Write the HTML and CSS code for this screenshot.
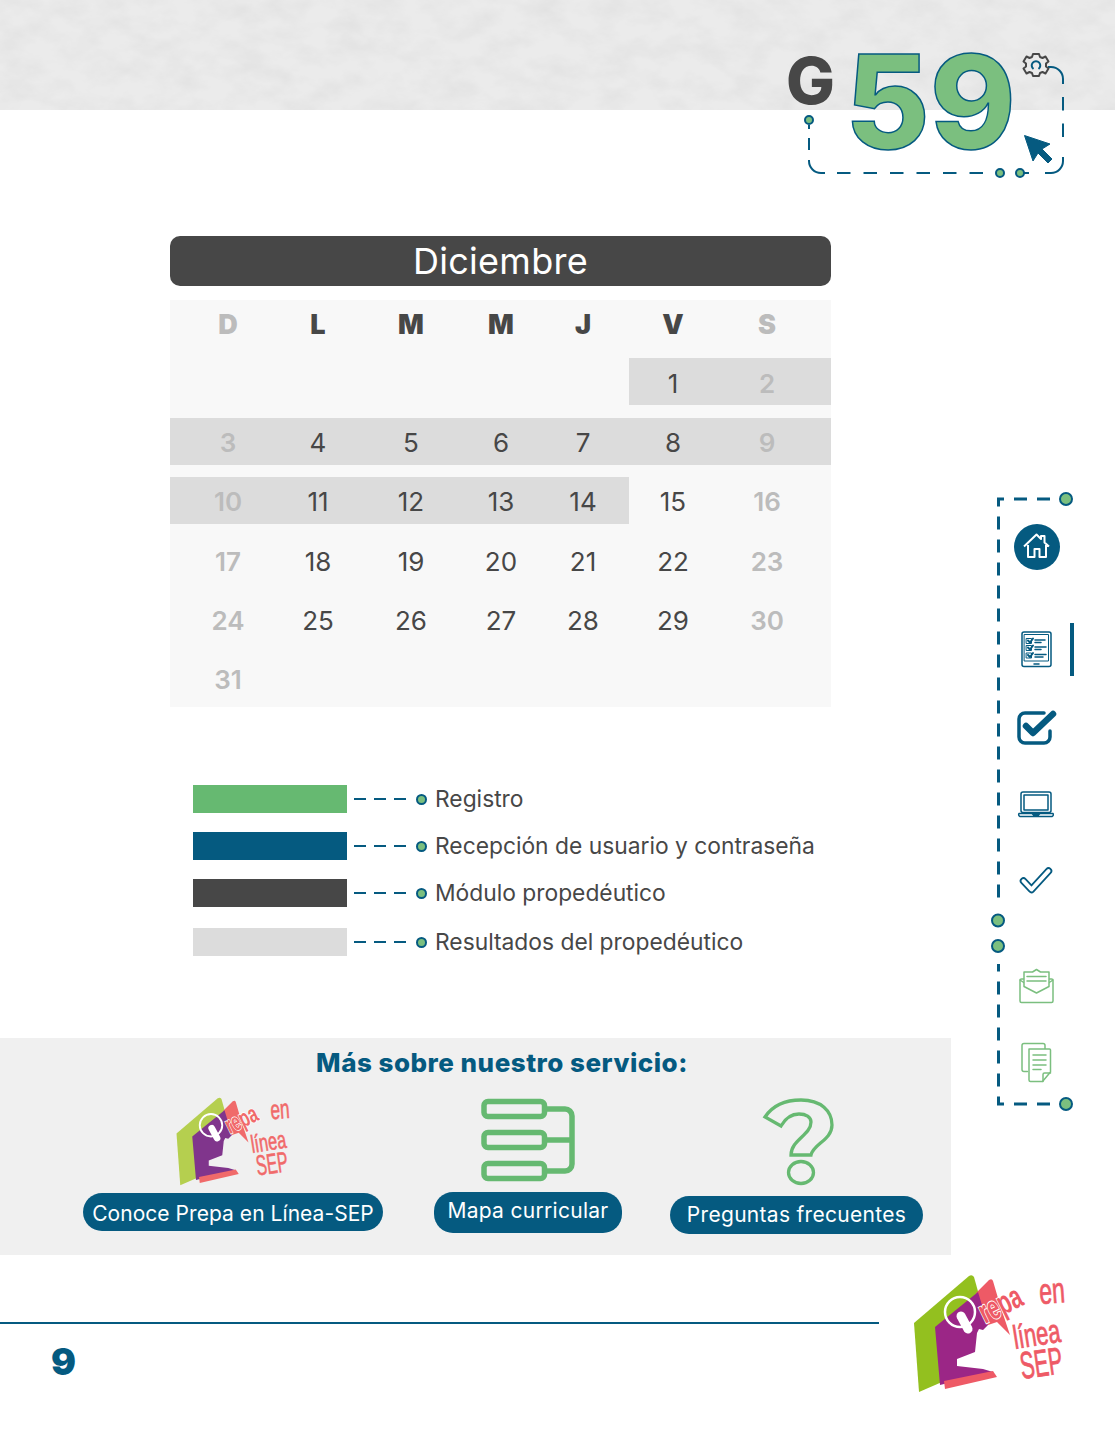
FILE: index.html
```html
<!DOCTYPE html>
<html lang="es">
<head>
<meta charset="utf-8">
<title>Calendario Diciembre</title>
<link rel="stylesheet" href="styles.css">
</head>
<body>
<div class="page">
  <header class="band">
    <svg class="texture" width="1115" height="110" aria-hidden="true">
      <filter id="mottle" x="0" y="0" width="100%" height="100%">
        <feTurbulence type="fractalNoise" baseFrequency="0.03 0.05" numOctaves="5" seed="7"/>
        <feColorMatrix type="matrix" values="0 0 0 0 0.6  0 0 0 0 0.6  0 0 0 0 0.6  0.5 0 0 0 -0.18"/>
      </filter>
      <rect width="1115" height="110" filter="url(#mottle)"/>
    </svg>
  </header>

  <svg class="badge" viewBox="780 40 300 145" width="300" height="145">
    <path class="deco-line" d="M809 125v4M809 160v1a12 12 0 0 0 12 12h4M1020 173h9M1045 173h6a12 12 0 0 0 12-12v-4M1048 67h3a12 12 0 0 1 12 12v5"/>
    <path class="deco-dash" d="M809 138V150M837 173H985M1063 97V150"/>
    <text class="badge-g" x="786" y="104" textLength="49" lengthAdjust="spacingAndGlyphs">G</text>
    <text class="badge-num" x="845" y="149" textLength="171" lengthAdjust="spacingAndGlyphs">59</text>
    <circle class="deco-dot small" cx="809" cy="120" r="4"/>
    <circle class="deco-dot small" cx="1000" cy="173" r="4"/>
    <circle class="deco-dot small" cx="1020" cy="173" r="4"/>
    <path class="gear" d="M1033 54h6l1 3 2.500 1 3-1.500 3 5-2.500 2v3l2.500 2-3 5-3-1.500-2.500 1-1 3h-6l-1-3-2.500-1-3 1.500-3-5 2.500-2v-3l-2.500-2 3-5 3 1.500 2.500-1z"/>
    <path class="gear-in" d="M1033.500 69a4.300 4.300 0 1 1 5 0"/>
    <path class="cursor" d="M1024.500 135.500L1050 144l-8 5 10 10-4 4-10-10-5 8z"/>
  </svg>

  <main class="main">
    <h1 class="month">Diciembre</h1>
    <section class="calendar">
      <div class="cell head wk">D</div><div class="cell head">L</div><div class="cell head">M</div><div class="cell head">M</div><div class="cell head">J</div><div class="cell head">V</div><div class="cell head wk">S</div>

      <div class="cell"></div><div class="cell"></div><div class="cell"></div><div class="cell"></div><div class="cell"></div><div class="cell hl">1</div><div class="cell wk hl">2</div>

      <div class="cell wk hl">3</div><div class="cell hl">4</div><div class="cell hl">5</div><div class="cell hl">6</div><div class="cell hl">7</div><div class="cell hl">8</div><div class="cell wk hl">9</div>

      <div class="cell wk hl">10</div><div class="cell hl">11</div><div class="cell hl">12</div><div class="cell hl">13</div><div class="cell hl">14</div><div class="cell">15</div><div class="cell wk">16</div>

      <div class="cell wk">17</div><div class="cell">18</div><div class="cell">19</div><div class="cell">20</div><div class="cell">21</div><div class="cell">22</div><div class="cell wk">23</div>

      <div class="cell wk">24</div><div class="cell">25</div><div class="cell">26</div><div class="cell">27</div><div class="cell">28</div><div class="cell">29</div><div class="cell wk">30</div>

      <div class="cell wk">31</div><div class="cell"></div><div class="cell"></div><div class="cell"></div><div class="cell"></div><div class="cell"></div><div class="cell"></div>
    </section>

    <ul class="legend">
      <li class="legend-row"><span class="swatch green"></span><span class="dash"></span><span class="dot"></span><span class="legend-text">Registro</span></li>
      <li class="legend-row"><span class="swatch blue"></span><span class="dash"></span><span class="dot"></span><span class="legend-text">Recepción de usuario y contraseña</span></li>
      <li class="legend-row"><span class="swatch dark"></span><span class="dash"></span><span class="dot"></span><span class="legend-text">Módulo propedéutico</span></li>
      <li class="legend-row last"><span class="swatch grey"></span><span class="dash"></span><span class="dot"></span><span class="legend-text">Resultados del propedéutico</span></li>
    </ul>
  </main>

  <section class="services">
    <h2 class="services-title">Más sobre nuestro servicio:</h2>
    <div class="services-row">
      <div class="service s-one">
        <svg class="logo-small" viewBox="0 0 180 130" width="135" height="97.500">
          <path class="lg-green soft" d="M14 58L69 11q3-2 5 1L79 30 42 117 19 127z"/>
          <path class="lg-coral soft" d="M76 28L89 15q3-2 4 1l7 24 10 30-13-13-9 3z"/>
          <path class="lg-purple" d="M35 62L78 27 88 60l-5 5-4-1-2 4-2 19-18 7 0 7 26 3 10 3-53 13z"/>
          <path class="lg-coral soft" d="M44 116L93 106l4 6-52 12z"/>
          <circle class="lg-ring" cx="60" cy="47" r="15"/>
          <path class="lg-finger" d="M61 51L68 64"/>
          <text class="lg-text halo" transform="translate(85 59) rotate(-26) scale(.64 1)" font-size="33">repa</text>
          <text class="lg-text" transform="translate(140 39) rotate(-4) scale(.64 1)" font-size="36">en</text>
          <text class="lg-text" transform="translate(115 84) rotate(-9) scale(.66 1)" font-size="33">línea</text>
          <text class="lg-text" transform="translate(122 114) rotate(-8) scale(.56 1)" font-size="38">SEP</text>
        </svg>
        <a class="pill tight">Conoce Prepa en Línea-SEP</a>
      </div>
      <div class="service s-two">
        <svg class="icon-map" viewBox="478 1096 100 88" width="100" height="88">
          <g class="map-stroke">
            <rect x="484" y="1101.500" width="60.500" height="15" rx="4"/>
            <rect x="484" y="1132.500" width="60.500" height="15" rx="4"/>
            <rect x="484" y="1163.500" width="60.500" height="15" rx="4"/>
            <path d="M547 1109h18a7 7 0 0 1 7 7v48a7 7 0 0 1-7 7h-18M547 1140h25"/>
          </g>
        </svg>
        <a class="pill">Mapa curricular</a>
      </div>
      <div class="service s-three">
        <svg class="icon-q" viewBox="761 1098 73 90" width="73" height="90">
          <path class="map-stroke thin" d="M764 1117C772 1105 785 1100 800 1100C820 1100 831 1111 831 1125C831 1140 812 1144 810 1155H790C790 1140 810 1135 810 1122C810 1117 805 1114 798 1114C790 1114 784 1119 780 1126Z"/>
          <ellipse class="map-stroke thin" cx="800" cy="1172.500" rx="12.500" ry="11"/>
        </svg>
        <a class="pill lower">Preguntas frecuentes</a>
      </div>
    </div>
  </section>

  <footer class="footer">
    <div class="footer-left">
      <div class="rule"></div>
      <div class="page-num">9</div>
    </div>
    <svg class="logo-big" viewBox="0 0 180 130" width="180" height="130">
      <path class="lg-green bright" d="M14 58L69 11q3-2 5 1L79 30 42 117 19 127z"/>
      <path class="lg-coral" d="M76 28L89 15q3-2 4 1l7 24 10 30-13-13-9 3z"/>
      <path class="lg-purple deep" d="M35 62L78 27 88 60l-5 5-4-1-2 4-2 19-18 7 0 7 26 3 10 3-53 13z"/>
      <path class="lg-coral" d="M44 116L93 106l4 6-52 12z"/>
      <circle class="lg-ring" cx="60" cy="47" r="15"/>
      <path class="lg-finger" d="M61 51L68 64"/>
      <text class="lg-text big halo" transform="translate(85 59) rotate(-26) scale(.64 1)" font-size="33">repa</text>
      <text class="lg-text big" transform="translate(140 39) rotate(-4) scale(.64 1)" font-size="36">en</text>
      <text class="lg-text big" transform="translate(115 84) rotate(-9) scale(.66 1)" font-size="33">línea</text>
      <text class="lg-text big" transform="translate(122 114) rotate(-8) scale(.56 1)" font-size="38">SEP</text>
    </svg>
  </footer>

  <svg class="rail" viewBox="985 485 100 635" width="100" height="635">
    <path class="deco-dash rail-line" d="M1050 499H998.500V902"/>
    <path class="deco-dash rail-line" d="M1050 1104H998.500V964"/>
    <circle class="deco-dot" cx="1066" cy="499" r="6"/>
    <circle class="deco-dot" cx="998" cy="920.500" r="6"/>
    <circle class="deco-dot" cx="998" cy="946" r="6"/>
    <circle class="deco-dot" cx="1066" cy="1104" r="6"/>
    <rect class="fill-blue" x="1070" y="623" width="4" height="53"/>

    <circle class="fill-blue" cx="1037" cy="547" r="23"/>
    <path class="st-white" d="M1024 546.500L1036.500 534.500 1041 539V536h3.500v6.500L1049 546.500M1028 545V557h6.500V549h5V557H1046V545"/>

    <g class="st-blue w1">
      <rect class="w15" x="1022" y="632" width="29" height="34.500" rx="2"/>
      <rect x="1024.500" y="634.500" width="24" height="26.500"/>
      <path class="w2" d="M1028 640.500l2 2 3-4M1028 647.500l2 2 3-4M1028 655l2 2 3-4"/>
      <path d="M1026.500 638.500h5v5h-5zM1026.500 645.500h5v5h-5zM1026.500 653h5v5h-5z"/>
      <path class="w15" d="M1035 640h10M1035 642.500h6M1035 647h11M1035 649.500h6M1035 654.500h11M1035 657h8M1034 664h5"/>
    </g>

    <path class="st-blue w3" d="M1050 731v6a6 6 0 0 1-6 6h-19a6 6 0 0 1-6-6v-18a6 6 0 0 1 6-6h19"/>
    <path class="st-blue w6" d="M1026 726l7 7 20-19"/>

    <g class="st-blue w15">
      <rect x="1021" y="792" width="30" height="20.500" rx="2"/>
      <rect x="1024" y="795" width="24" height="15"/>
      <path d="M1019 813.500h34a2 2 0 0 1-1 3h-32a2 2 0 0 1-1-3zM1032 813.500l1.500 1.500h5l1.500-1.500"/>
    </g>

    <path class="tick-out" d="M1023.500 881L1031.500 889.500 1048.500 871"/>
    <path class="tick-in" d="M1023.500 881L1031.500 889.500 1048.500 871"/>

    <g class="st-green w15">
      <rect x="1020" y="979" width="33" height="23.500" rx="1.500"/>
      <path d="M1020 980l16.500 11 16.500-11"/>
      <path class="bg-white" d="M1024 986.500V972h8.500l4-2.500 4 2.500h8.500v14.500l-12.500 6.500z"/>
      <path d="M1027 976.500h19M1027 981h19"/>
    </g>

    <g class="st-green w15">
      <path d="M1045 1049v-3.500a2 2 0 0 0-2-2h-19a2 2 0 0 0-2 2v24a2 2 0 0 0 2 2h3.500"/>
      <path class="bg-white" d="M1029 1049h20.500a1 1 0 0 1 1 1v22l-8 9.500h-12a1.500 1.500 0 0 1-1.500-1.500z"/>
      <path d="M1050.500 1073h-6a1.500 1.500 0 0 0-1.500 1.500v7"/>
      <path d="M1033 1055h13M1033 1060h13M1033 1065h13M1033 1069.500h8"/>
    </g>
  </svg>
</div>
</body>
</html>
```
FILE: styles.css
```css
* { box-sizing: border-box; }
html, body { margin: 0; padding: 0; background: #fff; }
body { font-family: Inter, "Liberation Sans", sans-serif; color: #474747; }
.page { position: relative; width: 1115px; height: 1443px; overflow: hidden; }

.band { position: relative; height: 110px; background: #ebebeb; }
.texture { display: block; }

.badge { position: absolute; left: 780px; top: 40px; overflow: visible; }
.badge-g { font: 800 65px Inter, sans-serif; fill: #474747; }
.badge-num { font: 800 130px Inter, sans-serif; fill: #7bbf7f; stroke: #055a80; stroke-width: 1.5px; }
.deco-line { fill: none; stroke: #055a80; stroke-width: 2px; }
.deco-dash { fill: none; stroke: #055a80; stroke-width: 2px; stroke-dasharray: 13.500 13; }
.deco-dot { fill: #7bbf7f; stroke: #055a80; stroke-width: 2px; }
.gear { fill: none; stroke: #474747; stroke-width: 2px; stroke-linejoin: round; }
.gear-in { fill: none; stroke: #055a80; stroke-width: 2px; }
.cursor { fill: #055a80; stroke: #055a80; stroke-linejoin: round; }

.main { margin-top: 126px; margin-left: 170px; width: 661px; }
.month {
  margin: 0; height: 50px; border-radius: 10px; background: #474747;
  color: #fff; font-size: 36px; font-weight: 400; line-height: 50px; text-align: center;
  letter-spacing: 0.3px;
}
.calendar {
  display: grid;
  grid-template-columns: 109px 78px 108px 72px 92px 88px 114px;
  grid-template-rows: 46px repeat(6, 47px);
  row-gap: 12.3px;
  margin-top: 14px; padding-bottom: 4px; height: 407px;
  background: #f8f8f8;
}
.cell { display: flex; align-items: center; justify-content: center; padding-top: 3px; font-size: 26px; font-weight: 400; color: #474747; }
.cell:nth-child(7n+1) { padding-left: 7px; }
.cell:nth-child(7n) { padding-right: 14px; }
.hl { background: #dcdcdc; }
.wk { color: #bcbcbc; font-weight: 600; }
.head { align-items: flex-start; padding-top: 10px; font-size: 27px; font-weight: 900; line-height: 30px; height: 46px; }
.head.wk { font-weight: 900; }

.legend { list-style: none; margin: 78px 0 0 23px; padding: 0; display: flex; flex-direction: column; gap: 19px; width: 700px; }
.legend-row { display: flex; align-items: center; height: 28px; }
.legend-row.last { margin-top: 2px; }
.swatch { width: 154px; height: 28px; flex: none; }
.green { background: #66b971; }
.blue { background: #055a80; }
.dark { background: #474747; }
.grey { background: #dcdcdc; }
.dash { width: 53px; height: 2px; margin-left: 7px; flex: none;
  background: repeating-linear-gradient(90deg, #055a80 0 12px, transparent 12px 20px); }
.dot { width: 11px; height: 11px; margin-left: 9px; margin-right: 8px; border-radius: 50%; flex: none; background: #7bbf7f; border: 2px solid #055a80; }
.legend-text { font-size: 22.800px; line-height: 26px; color: #474747; white-space: nowrap; }

.services { margin-top: 82px; width: 951px; height: 217px; background: #f0f0f0; }
.services-title { margin: 0; height: 50px; padding-left: 53px; line-height: 50px; text-align: center; font-size: 26px; font-weight: 800; color: #055a80; letter-spacing: 0.500px; }
.services-row { display: flex; margin-top: 2px; padding-left: 83px; align-items: flex-start; }
.service { display: flex; flex-direction: column; align-items: center; }
.s-one { width: 300px; }
.s-two { width: 188px; margin-left: 51px; }
.s-three { width: 253px; margin-left: 48px; }
.logo-small { display: block; margin-bottom: 5.500px; }
.icon-map { display: block; margin-top: 6px; margin-bottom: 8px; }
.icon-q { display: block; margin-top: 8px; margin-bottom: 8px; margin-left: 3px; }
.pill { display: block; width: 100%; height: 38px; border-radius: 19px; background: #055a80; color: #fff; font-size: 21px; line-height: 40px; text-align: center; white-space: nowrap; letter-spacing: 0.300px; }
.pill.tight { letter-spacing: 0.050px; line-height: 41px; }
.pill.lower { line-height: 38px; }
.s-two .pill { height: 41px; line-height: 37px; }

.map-stroke { fill: none; stroke: #66b971; stroke-width: 5.500px; }
.map-stroke.thin { stroke-width: 3.300px; }

.footer { display: flex; margin-top: 10px; }
.footer-left { width: 879px; padding-top: 57px; }
.rule { height: 2px; background: #055a80; }
.page-num { margin-top: 16px; padding-left: 51px; font-size: 37px; font-weight: 900; line-height: 44px; color: #055a80; }
.logo-big { display: block; margin-left: 21px; }

.lg-green { fill: #b5cf4f; }
.lg-green.bright { fill: #93c01f; }
.lg-coral { fill: #ee5a66; }
.lg-coral.soft { fill: #f06a6a; }
.lg-purple { fill: #80358c; }
.lg-purple.deep { fill: #9b2686; }
.lg-ring { fill: none; stroke: #fff; stroke-width: 2.500px; }
.lg-finger { fill: none; stroke: #fff; stroke-width: 9px; stroke-linecap: round; }
.lg-text { font-family: "Liberation Sans Narrow", "Liberation Sans", sans-serif; font-weight: 400; fill: #f06a6a; stroke: #f06a6a; stroke-width: 0.800px; }
.lg-text.big { fill: #ee5a66; stroke: #ee5a66; }
.lg-text.halo { font-weight: 700; stroke: #fff; stroke-width: 2px; paint-order: stroke; }

.rail { position: absolute; left: 985px; top: 485px; }
.rail-line { stroke-width: 3px; stroke-dasharray: 13 10; }
.fill-blue { fill: #055a80; }
.st-white { fill: none; stroke: #fff; stroke-width: 2px; stroke-linejoin: round; }
.st-blue { fill: none; stroke: #055a80; stroke-linecap: round; stroke-linejoin: round; }
.st-green { fill: none; stroke: #7bbf7f; stroke-linecap: round; stroke-linejoin: round; }
.w1 { stroke-width: 1px; }
.w15 { stroke-width: 1.500px; }
.w2 { stroke-width: 2px; }
.w3 { stroke-width: 3.500px; }
.w6 { stroke-width: 6.500px; }
.bg-white { fill: #fff; }
.tick-out { fill: none; stroke: #055a80; stroke-width: 7.500px; stroke-linecap: round; stroke-linejoin: round; }
.tick-in { fill: none; stroke: #fff; stroke-width: 4px; stroke-linecap: round; stroke-linejoin: round; }
```
